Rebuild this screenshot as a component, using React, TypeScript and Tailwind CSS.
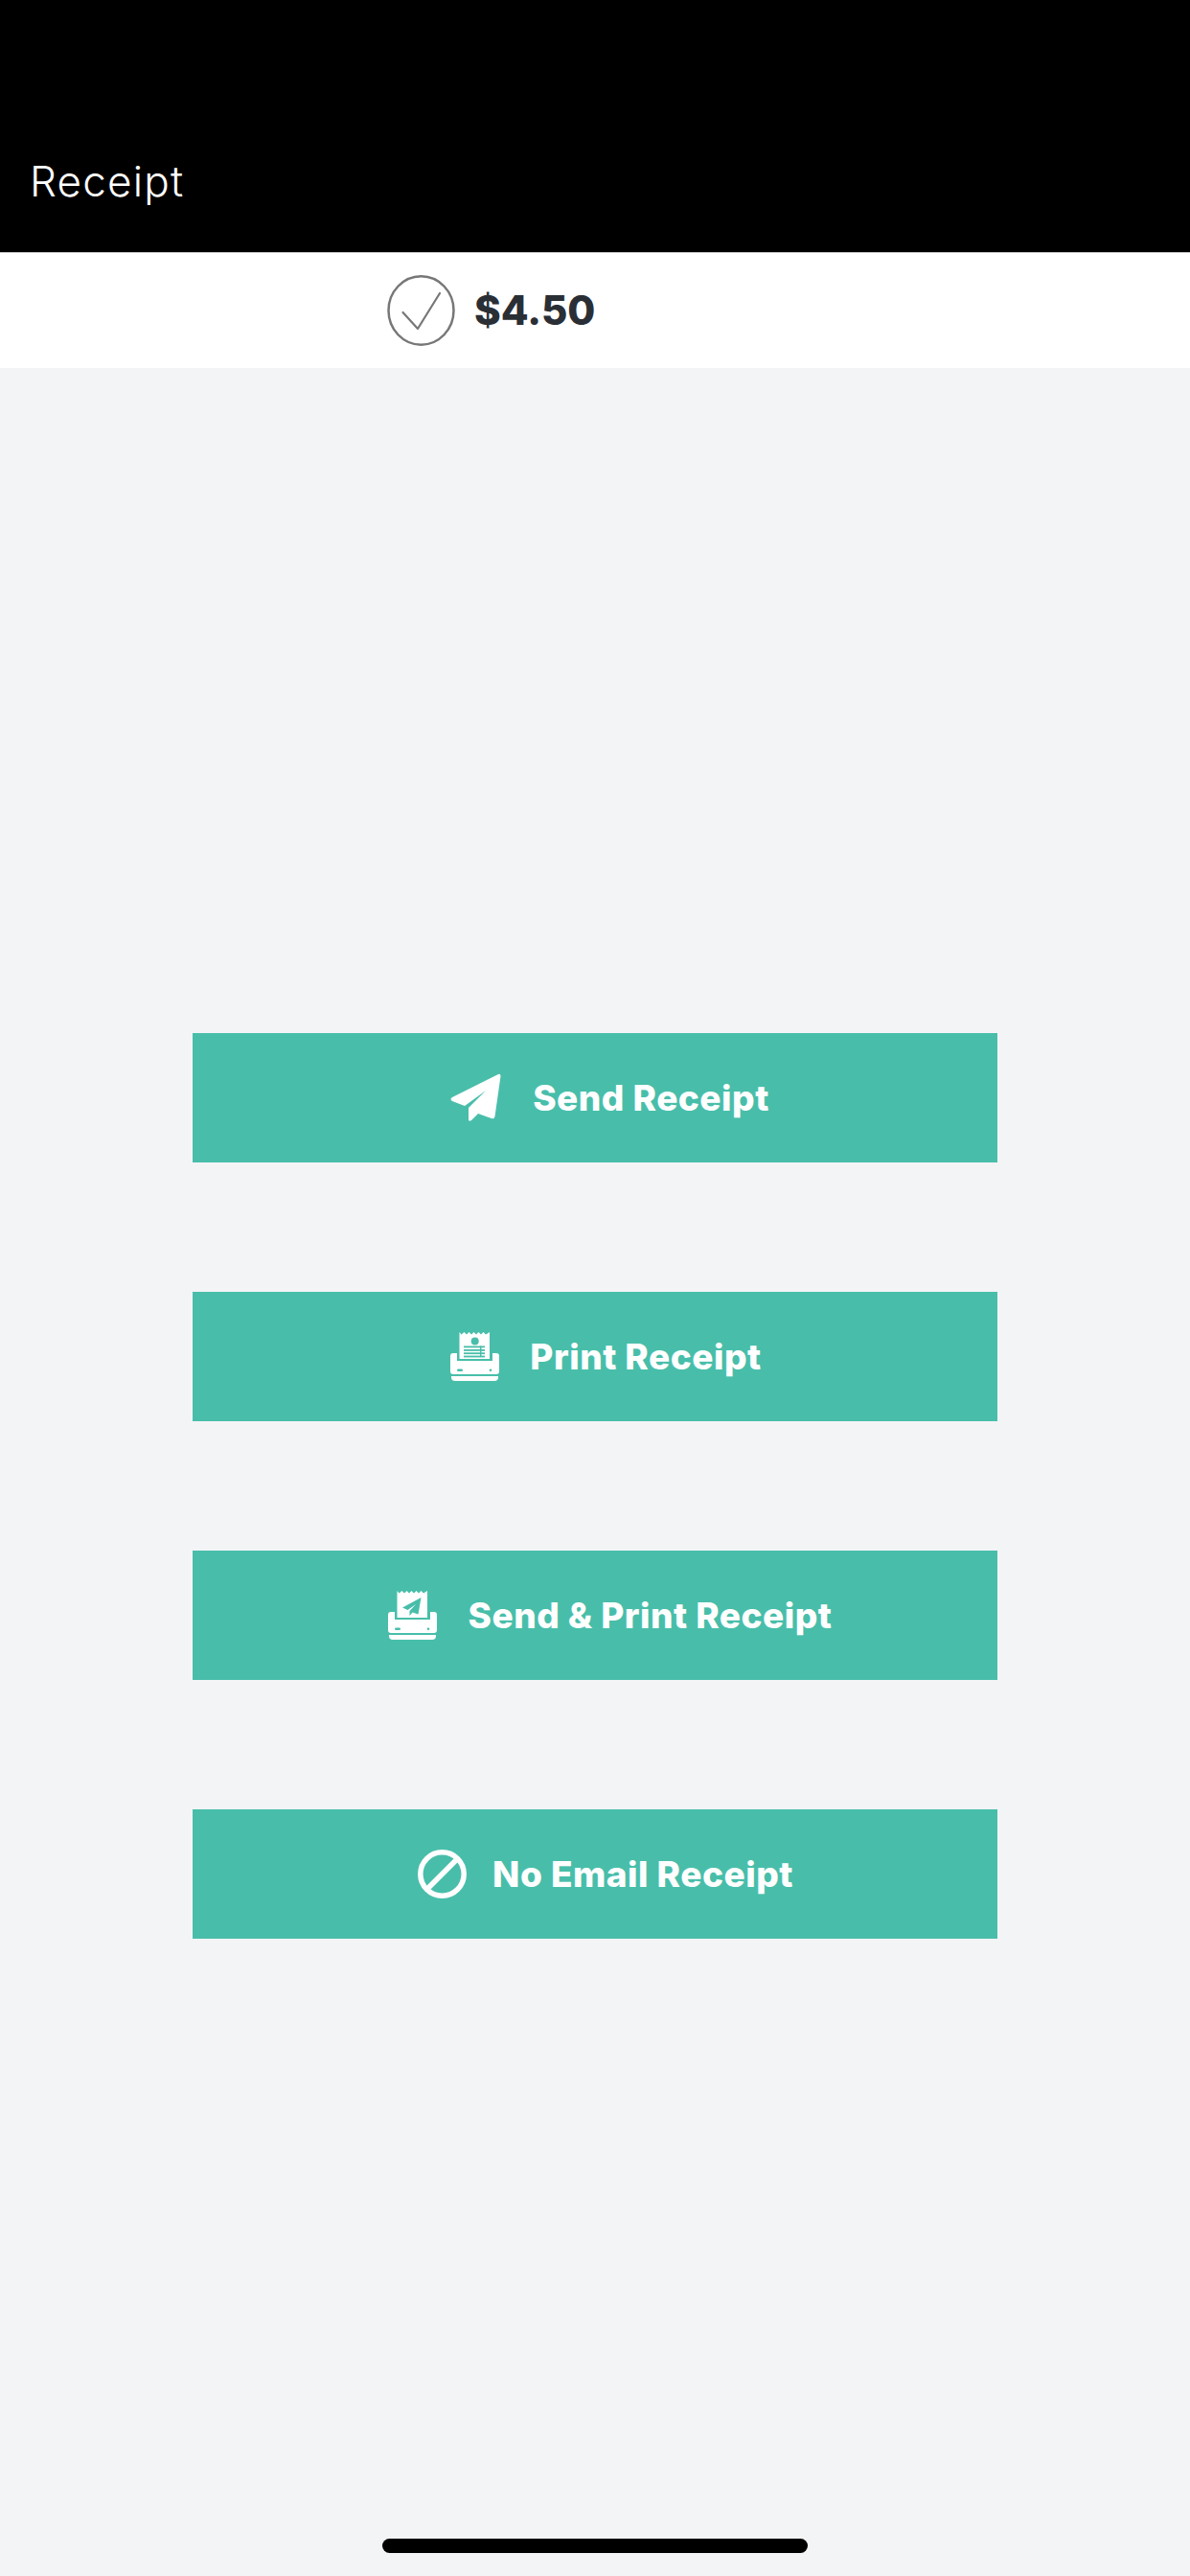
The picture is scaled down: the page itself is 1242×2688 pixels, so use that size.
import type { ReactNode } from "react";

const TEAL = "#48beaa";

function PlaneIcon() {
  return (
    <svg viewBox="0 0 53 51" className="h-[51px] w-[53px] shrink-0" fill="#fff">
      <path d="M50 1 L2 25 Q-1 27 2 29 L15 34 L37 18 L19 36 V48 Q19 51 22 49 L29 42 L43 47 Q46 48 46.5 45 L52.5 3 Q52.5 0 50 1Z" />
    </svg>
  );
}

function PrinterBase() {
  return (
    <>
      <path d="M3 22 H7 V30 H44 V22 H48 Q51 22 51 25 V41 Q51 44 48 44 H3 Q0 44 0 41 V25 Q0 22 3 22Z" />
      <path d="M1 46 H50 V47 Q50 51 46 51 H5 Q1 51 1 47Z" />
      <rect x="7" y="38.5" width="6" height="2.5" rx="1.2" fill={TEAL} />
      <circle cx="42" cy="39.8" r="1.3" fill={TEAL} />
    </>
  );
}

const PAPER =
  "M9.5 28 V0 L11.5 2.5 L14.5 0 L17 2.5 L19.5 0 L22 2.5 L24.5 0 L27 2.5 L29.5 0 L32 2.5 L34.5 0 L37 2.5 L41 0 V28Z";

function PrintIcon() {
  return (
    <svg viewBox="0 0 51 51" className="h-[51px] w-[51px] shrink-0" fill="#fff">
      <PrinterBase />
      <path d={PAPER} />
      <circle cx="25.7" cy="9.5" r="4" fill={TEAL} />
      <rect x="14" y="14.5" width="22" height="1.8" fill={TEAL} />
      <rect x="14" y="18" width="22" height="1.8" fill={TEAL} />
      <rect x="14" y="21.3" width="22" height="1.8" fill={TEAL} />
      <rect x="14" y="24.6" width="22" height="1.8" fill={TEAL} />
      <rect x="31" y="14.5" width="1.4" height="11.5" fill={TEAL} />
    </svg>
  );
}

function SendPrintIcon() {
  return (
    <svg viewBox="0 0 51 51" className="h-[51px] w-[51px] shrink-0" fill="#fff">
      <PrinterBase />
      <path d={PAPER} />
      <path d="M34.5 7 L15 17.5 L20.5 20 L29 14 L22.5 21 V26 L25.5 22.5 L31.5 24.5Z" fill={TEAL} />
    </svg>
  );
}

function NoEmailIcon() {
  return (
    <svg viewBox="0 0 51 51" className="h-[51px] w-[51px] shrink-0" fill="none" stroke="#fff" strokeWidth="5.5">
      <circle cx="25.5" cy="25.5" r="22.7" />
      <line x1="10" y1="41" x2="41" y2="10" />
    </svg>
  );
}

function ActionButton({ icon, label, spacing }: { icon: ReactNode; label: string; spacing: string }) {
  return (
    <button className={`flex h-[135px] w-[840px] items-center justify-center bg-[#48beaa] ${spacing}`}>
      {icon}
      <span className="text-[37px] leading-none font-extrabold tracking-[0.5px] text-white">{label}</span>
    </button>
  );
}

export default function App() {
  return (
    <div className="relative flex h-[2688px] w-[1242px] flex-col overflow-hidden bg-[#f3f4f6] font-['Inter',sans-serif]">
      <header className="flex h-[264px] items-end border-b border-[#c4c4c4] bg-black pb-[52px] pl-[31px]">
        <h1 className="text-[44px] leading-none font-[350] tracking-[1.2px] text-white">Receipt</h1>
      </header>

      <div className="flex h-[120px] items-center gap-[20px] bg-white pl-[404px]">
        <svg viewBox="0 0 71 74" className="h-[74px] w-[71px]" fill="none" stroke="#777" strokeWidth="2.5">
          <ellipse cx="35.5" cy="37" rx="34" ry="35.7" />
          <path d="M16.5 39 L32 56 L55 19" strokeLinecap="round" strokeLinejoin="round" strokeWidth="2.2" />
        </svg>
        <span className="text-[42px] leading-none font-extrabold text-[#2a2f36]">$4.50</span>
      </div>

      <main className="flex flex-col items-center gap-[135px] pt-[694px]">
        <ActionButton icon={<PlaneIcon />} label="Send Receipt" spacing="gap-[33px] pl-[31px]" />
        <ActionButton icon={<PrintIcon />} label="Print Receipt" spacing="gap-[32px] pl-[23px]" />
        <ActionButton icon={<SendPrintIcon />} label="Send & Print Receipt" spacing="gap-[33px] pl-[31px]" />
        <ActionButton icon={<NoEmailIcon />} label="No Email Receipt" spacing="gap-[27px] pl-[22px]" />
      </main>

      <div className="absolute bottom-[24px] left-[399px] h-[15px] w-[444px] rounded-full bg-black" />
    </div>
  );
}
